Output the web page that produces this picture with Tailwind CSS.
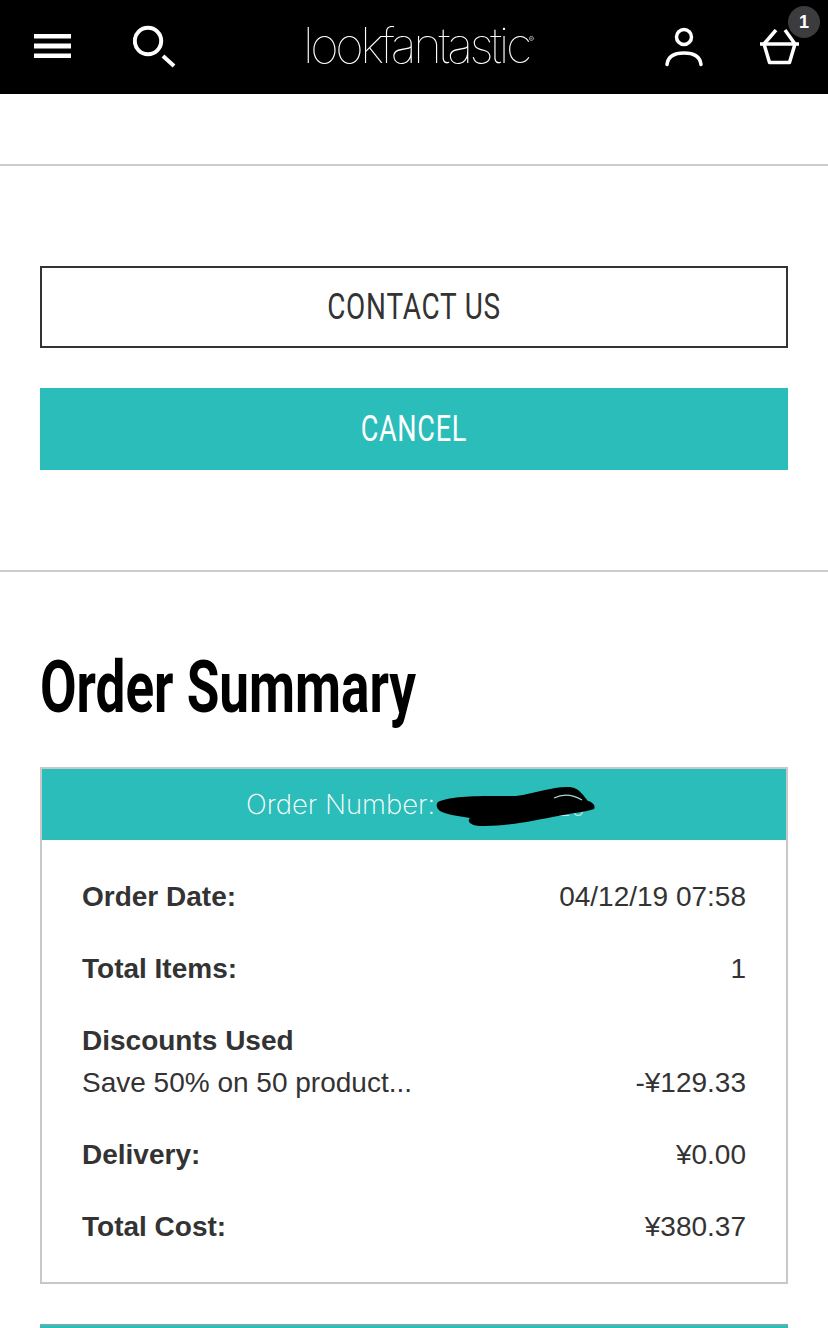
<!DOCTYPE html>
<html lang="en">
<head>
    <meta charset="UTF-8">
    <meta name="viewport" content="width=device-width, initial-scale=1.0">
    <title>lookfantastic - Order Summary</title>
    <script src="https://cdn.jsdelivr.net/npm/@tailwindcss/browser@4"></script>
</head>
<body class="bg-white font-['Liberation_Sans',sans-serif] text-[#333] h-[1328px] overflow-hidden">
    <!-- Header -->
    <header class="relative h-[94px] bg-black text-white flex items-center">
        <svg class="shrink-0 ml-[34px] w-[37px] h-[24px] mt-[-2px]" viewBox="0 0 37 24" fill="#fff">
            <rect y="0" width="37" height="4.5"/><rect y="9.5" width="37" height="5"/><rect y="19.5" width="37" height="4.5"/>
        </svg>
        <svg class="shrink-0 ml-[62px] mt-[-1px] w-[44px] h-[44px]" viewBox="0 0 44 44" fill="none" stroke="#fff">
            <circle cx="15" cy="16" r="13.2" stroke-width="4"/>
            <path d="M30 31 L41 41" stroke-width="4"/>
        </svg>
        <div class="shrink-0 ml-[126px] mt-[-3px] font-['Inter',sans-serif] font-thin text-[49px] leading-none tracking-[-3.4px] w-[235px] whitespace-nowrap transform-gpu">lookfantastic<sup class="text-[8px] tracking-normal align-super font-normal text-gray-300">®</sup></div>
        <svg class="shrink-0 ml-[127px] mt-[-1px] w-[38px] h-[40px]" viewBox="0 0 38 40" fill="none" stroke="#fff" stroke-width="3.5">
            <circle cx="19" cy="10" r="7.5"/>
            <path d="M2 37.5 C3 29 10 26 19 26 C28 26 35 29 36 37.5" stroke-linecap="round"/>
        </svg>
        <svg class="shrink-0 ml-[57px] mt-[-1px] w-[40px] h-[36px]" viewBox="0 0 40 36" fill="none" stroke="#fff" stroke-width="3.5">
            <path d="M0 15 H39"/>
            <path d="M4 15 L9.5 33.5 H29.5 L35 15" stroke-linejoin="round"/>
            <path d="M4 15 L16 1 M35 15 L25 1"/>
        </svg>
        <span class="absolute left-[788px] top-[6px] w-8 h-8 rounded-full bg-[#3c3c3e] text-white font-bold text-[18px] flex items-center justify-center">1</span>
    </header>

    <div class="mt-[70px] border-t-2 border-[#ccc]"></div>

    <!-- Actions -->
    <div class="mx-10 mt-[100px] flex flex-col gap-10">
        <button class="h-[82px] border-2 border-[#333] text-[37px] text-[#333]">
            <span class="inline-block font-['Roboto',sans-serif] font-normal scale-x-[0.755] tracking-[1px]">CONTACT US</span>
        </button>
        <button class="h-[82px] bg-[#2bbdb9] text-[37px] text-white">
            <span class="inline-block font-['Roboto',sans-serif] font-normal scale-x-[0.73] tracking-[1px]">CANCEL</span>
        </button>
    </div>

    <div class="mt-[100px] border-t-2 border-[#ccc]"></div>

    <!-- Order summary -->
    <section class="mx-10 mt-[76px]">
        <h1 class="font-['Roboto',sans-serif] font-bold text-[72px] leading-[80px] text-black origin-left scale-x-[0.737] whitespace-nowrap">Order Summary</h1>

        <div class="mt-[39px] border-2 border-[#c8c8c8] h-[517px]">
            <div class="relative h-[71px] bg-[#2bbdb9] text-white text-[27.5px] font-['Inter',sans-serif] font-extralight flex items-center pl-[204px]">
                <span>Order Number:</span>
                <span class="absolute left-[514px] top-[21px] text-[24px] text-white/70">20</span>
                <svg class="absolute left-[394px] top-[16px] w-[160px] h-[42px]" viewBox="0 0 160 42" fill="#000">
                    <path d="M2 17 C16 10 50 11 80 11 C100 8 118 1 134 2 C144 3 148 12 152 16 C156 17 160 20 158 24 C150 27 136 28 122 31 C100 35 70 42 44 41 C36 41 30 37 34 33 C22 31 8 29 4 26 C0 23 0 19 2 17 Z"/>
                    <path d="M118 13 C126 9 136 9 146 15" fill="none" stroke="#9fdcd9" stroke-width="1.2"/>
                </svg>
            </div>
            <div class="px-10 text-[28px] leading-[32px] text-[#333]">
                <div class="mt-[41px] flex justify-between">
                    <span class="font-bold">Order Date:</span><span>04/12/19 07:58</span>
                </div>
                <div class="mt-[40px] flex justify-between">
                    <span class="font-bold">Total Items:</span><span>1</span>
                </div>
                <div class="mt-[40px] font-bold">Discounts Used</div>
                <div class="mt-[10px] flex justify-between">
                    <span>Save 50% on 50 product...</span><span>-¥129.33</span>
                </div>
                <div class="mt-[40px] flex justify-between">
                    <span class="font-bold">Delivery:</span><span>¥0.00</span>
                </div>
                <div class="mt-[40px] flex justify-between">
                    <span class="font-bold">Total Cost:</span><span>¥380.37</span>
                </div>
            </div>
        </div>

        <div class="mt-[40px] h-1 bg-[#2bbdb9] border-t-2 border-[#5fb3ae]"></div>
    </section>
</body>
</html>
